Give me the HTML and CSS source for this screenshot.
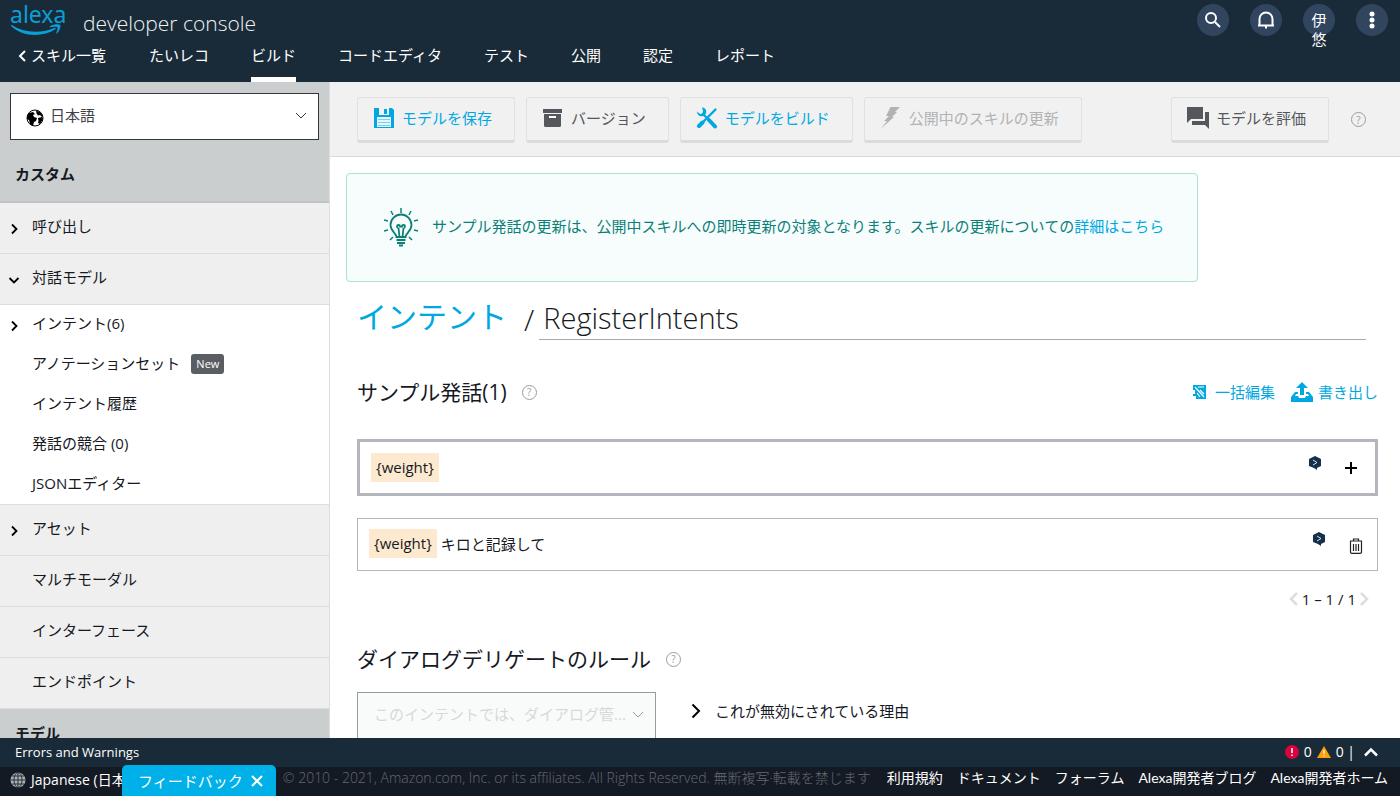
FILE: index.html
```html
<!DOCTYPE html>
<html lang="ja">
<head>
<meta charset="utf-8">
<meta name="viewport" content="width=device-width, initial-scale=1">
<title>alexa developer console</title>
<link rel="stylesheet" href="styles.css">
</head>
<body>
<header class="header">
  <div class="header-top">
    <a class="logo" href="#">
      <span class="logo-text">alexa</span>
      <svg class="logo-smile" width="52" height="12" viewBox="0 0 52 12" aria-hidden="true"><path d="M2 1C13 9 32 9.500 44.500 4c1-.5 1.800.5.900 1.200C33 13.500 12 13 1.300 2.200.700 1.500 1.300.500 2 1z"/><path d="M40 2.200C43.500.200 48.500-.2 50 .8c1.200 1.200-.3 6-3 8.500-.5.400-1.100.2-.9-.3.700-1.700 2-4.800 1.200-5.700-.8-.9-4.800-.4-6.800-.1-.8 0-1-.7-.5-1z"/></svg>
    </a>
    <span class="product">developer console</span>
    <div class="header-actions">
      <button class="round" aria-label="検索"><svg width="16" height="16" viewBox="0 0 16 16"><circle cx="6" cy="6" r="5"/><path d="M10 10l5 5"/></svg></button>
      <button class="round" aria-label="通知"><svg width="18" height="18" viewBox="0 0 18 18"><path d="M1 14.500h16M2.500 14V8a6.500 6.500 0 0 1 13 0v6M8 16.500h2"/></svg></button>
      <button class="round user">伊悠</button>
      <button class="round" aria-label="メニュー"><svg class="dots" width="6" height="18" viewBox="0 0 6 18"><circle cx="3" cy="3" r="2.500"/><circle cx="3" cy="9" r="2.500"/><circle cx="3" cy="15" r="2.500"/></svg></button>
    </div>
  </div>
  <nav class="tabs">
    <a class="tab back" href="#"><svg width="8" height="12" viewBox="0 0 8 12"><path d="M7 1L2 6l5 5"/></svg>スキル一覧</a>
    <a class="tab" href="#">たいレコ</a>
    <a class="tab active" href="#">ビルド</a>
    <a class="tab" href="#">コードエディタ</a>
    <a class="tab" href="#">テスト</a>
    <a class="tab" href="#">公開</a>
    <a class="tab" href="#">認定</a>
    <a class="tab" href="#">レポート</a>
  </nav>
</header>

<div class="workspace">
  <aside class="sidebar">
    <div class="side-head">
      <div class="lang">
        <svg class="earth" width="18" height="18" viewBox="0 0 18 18" aria-hidden="true"><circle cx="9" cy="9" r="8" fill="#fff" stroke="#000"/><path d="M1 7l2-3 4-1 2 2-2 1 1 2 3 1-1 3-2 1-1 4-3-2-1-4-2-1zM10 1.500l4 1.500 3 4-1 1-2-2-2 .5-1.500-2zM12 9l4-1 1 2-3 5-2-1 .5-2z"/></svg>
        <select class="lang-select" aria-label="言語"><option>日本語</option></select>
        <svg class="caret" width="12" height="8" viewBox="0 0 12 8" aria-hidden="true"><path d="M1 1l5 5 5-5"/></svg>
      </div>
      <h2 class="side-title">カスタム</h2>
    </div>
    <nav>
      <a class="side-row" href="#"><svg class="chev" width="14" height="12" viewBox="0 0 14 12"><path d="M5 1.500L9.500 6 5 10.500"/></svg>呼び出し</a>
      <a class="side-row" href="#"><svg class="chev" width="14" height="12" viewBox="0 0 14 12"><path d="M2.500 4L7 8.500 11.500 4"/></svg>対話モデル</a>
      <div class="side-sub">
        <a class="sub-row" href="#"><svg class="chev" width="14" height="12" viewBox="0 0 14 12"><path d="M5 1.500L9.500 6 5 10.500"/></svg>インテント(6)</a>
        <a class="sub-row" href="#">アノテーションセット<span class="new">New</span></a>
        <a class="sub-row" href="#">インテント履歴</a>
        <a class="sub-row" href="#">発話の競合 (0)</a>
        <a class="sub-row" href="#">JSONエディター</a>
      </div>
      <a class="side-row" href="#"><svg class="chev" width="14" height="12" viewBox="0 0 14 12"><path d="M5 1.500L9.500 6 5 10.500"/></svg>アセット</a>
      <a class="side-row" href="#">マルチモーダル</a>
      <a class="side-row" href="#">インターフェース</a>
      <a class="side-row" href="#">エンドポイント</a>
    </nav>
    <div class="side-foot"><h2 class="side-title">モデル</h2></div>
  </aside>

  <main class="main">
    <div class="toolbar">
      <button class="tool blue"><svg width="22" height="22" viewBox="0 0 22 22"><path fill="currentColor" d="M1 1h18l2 2v18H1z"/><path fill="#f1f1f1" d="M6 1h10v7H6z"/><path fill="currentColor" d="M11 2h3v5h-3z"/><path fill="#e4f5fb" d="M4 10h14v10H4z"/><path stroke="#7fcdec" d="M5 12.500h12M5 15.500h12M5 18.500h12"/></svg>モデルを保存</button>
      <button class="tool"><svg width="22" height="22" viewBox="0 0 22 22"><path fill="currentColor" d="M1 2h19v4H1zM2 7h17v11.500a1.500 1.500 0 0 1-1.500 1.500h-14A1.500 1.500 0 0 1 2 18.500z"/><path fill="#fff" d="M7 9h7v2H7z"/></svg>バージョン</button>
      <button class="tool blue"><svg width="22" height="22" viewBox="0 0 22 22"><path fill="none" stroke="currentColor" stroke-width="4" stroke-linecap="round" d="M13 13l6 6.500M3 19l3.500-3.500"/><path fill="none" stroke="currentColor" stroke-width="2.400" stroke-linecap="round" d="M6 16L19.500 2.500M7 7l7 7"/><path fill="currentColor" d="M6 .5c3 0 5 2.500 4 6L7.500 9C4 10 1 8 1 4.500l3 2.500 2.500-.5.500-2.500z"/></svg>モデルをビルド</button>
      <button class="tool" disabled><svg width="22" height="22" viewBox="0 0 22 22"><path fill="currentColor" d="M10.500 0H20l-5 5h2l-5 5h2L1 21.500 7 14H4l5-5H6z"/></svg>公開中のスキルの更新</button>
      <button class="tool evaluate"><svg width="22" height="22" viewBox="0 0 22 22"><path fill="currentColor" d="M0 0h16v12H4l-4 4zM18 5h4v17l-4-4H5v-4h13z"/></svg>モデルを評価</button>
      <button class="help" aria-label="ヘルプ">?</button>
    </div>

    <div class="content">
      <div class="notice">
        <svg width="36" height="40" viewBox="0 0 36 40" aria-hidden="true"><path d="M18 1v5M8 4l2 4M28 4l-2 4M1 13l4 1M35 13l-4 1M1 24l4-1M35 24l-4-1M7 33l3-3M29 33l-3-3"/><path class="thick" d="M13.500 30c0-4-6-5.500-6-12a10.500 10.500 0 0 1 21 0c0 6.500-6 8-6 12zM13.500 33h9M14 36h8M16 38.500h4M16.500 30l-1-9M19.500 30l1-9M15.500 21a1.500 1.500 0 1 1 1.500-1.500h2a1.500 1.500 0 1 1 1.500 1.500"/></svg>
        <p class="notice-text">サンプル発話の更新は、公開中スキルへの即時更新の対象となります。スキルの更新についての<a href="#">詳細はこちら</a></p>
      </div>

      <div class="title-row">
        <a class="crumb" href="#">インテント</a>
        <span class="slash">/</span>
        <input class="intent-name" type="text" value="RegisterIntents" aria-label="インテント名">
      </div>

      <div class="section-head">
        <h2 class="section-title">サンプル発話(1)</h2>
        <button class="help" aria-label="ヘルプ">?</button>
        <div class="section-links">
          <a class="action" href="#"><svg width="13" height="14" viewBox="0 0 13 14"><path fill="#00a8e1" d="M0 0h13v14H3v-3H0v-2h2V5H0z"/><path stroke="#fff" stroke-width="1.200" d="M2 2l9 10M5 2h6M4 8l3 4M7 5l4 4"/></svg>一括編集</a>
          <a class="action export" href="#"><svg width="22" height="20" viewBox="0 0 22 20"><path fill="currentColor" d="M11 0l6 6h-4v7H9V6H5zM4 10h3v2H5l-1 2h3l1 2h6l1-2h3l-1-2h-2v-2h3l4 5v5H0v-5z"/></svg>書き出し</a>
        </div>
      </div>

      <div class="utterance entry">
        <mark class="slot">{weight}</mark>
        <div class="row-icons">
          <svg class="hex" width="12" height="14" viewBox="0 0 12 14"><path fill="#15304a" d="M6 0l6 3v7l-4 2v2l-3-2-5-2V3z"/><path fill="none" stroke="#d7e2ea" d="M4 4l4 2.500L4 9"/></svg>
          <button class="icon-btn" aria-label="追加"><svg width="12" height="12" viewBox="0 0 12 12"><path stroke="#000" stroke-width="2" d="M6 0v12M0 6h12"/></svg></button>
        </div>
      </div>
      <div class="utterance saved">
        <mark class="slot">{weight}</mark><span>キロと記録して</span>
        <div class="row-icons">
          <svg class="hex" width="12" height="14" viewBox="0 0 12 14"><path fill="#15304a" d="M6 0l6 3v7l-4 2v2l-3-2-5-2V3z"/><path fill="none" stroke="#d7e2ea" d="M4 4l4 2.500L4 9"/></svg>
          <button class="icon-btn trash" aria-label="削除"><svg width="14" height="16" viewBox="0 0 14 16"><path fill="none" stroke="#222" stroke-width="1.200" d="M1 3h12M4.500 3V1h5v2M1.500 3v11q0 1.400 1.500 1.400h8q1.500 0 1.500-1.400V3M4.500 6v7M7 6v7M9.500 6v7"/></svg></button>
        </div>
      </div>
      <div class="pager">
        <button class="icon-btn" aria-label="前へ"><svg width="9" height="14" viewBox="0 0 9 14"><path d="M8 1L2 7l6 6"/></svg></button>
        <span>1 – 1 / 1</span>
        <button class="icon-btn" aria-label="次へ"><svg width="9" height="14" viewBox="0 0 9 14"><path d="M1 1l6 6-6 6"/></svg></button>
      </div>

      <div class="section-head rules">
        <h2 class="section-title">ダイアログデリゲートのルール</h2>
        <button class="help" aria-label="ヘルプ">?</button>
      </div>
      <div class="rule-row">
        <div class="rule-box">
          <select class="rule-select" aria-label="ダイアログデリゲートのルール" disabled><option>このインテントでは、ダイアログ管...</option></select>
          <svg class="caret" width="12" height="8" viewBox="0 0 12 8" aria-hidden="true"><path d="M1 1l5 5 5-5"/></svg>
        </div>
        <button class="reason"><svg width="10" height="16" viewBox="0 0 10 16"><path d="M1.500 1.500L8 8l-6.500 6.500"/></svg>これが無効にされている理由</button>
      </div>
    </div>
  </main>
</div>

<section class="errors">
  <span class="errors-title">Errors and Warnings</span>
  <div class="counts">
    <svg width="14" height="14" viewBox="0 0 14 14"><circle cx="7" cy="7" r="7" fill="#d9043d"/><path stroke="#fff" stroke-width="1.500" d="M7 3v5M7 9.500V11"/></svg><span>0</span>
    <svg width="14" height="12" viewBox="0 0 14 12"><path fill="#ff9f0a" d="M7 0l7 12H0z"/><path stroke="#fff" stroke-width="1.200" d="M7 4v4M7 9.200v1.300"/></svg><span>0 |</span>
    <button class="icon-btn" aria-label="開く"><svg width="14" height="10" viewBox="0 0 14 10"><path fill="none" stroke="#fff" stroke-width="2.500" d="M1 8.500L7 2.500l6 6"/></svg></button>
  </div>
</section>
<footer class="footer">
  <button class="locale"><svg width="16" height="16" viewBox="0 0 16 16"><circle cx="8" cy="8" r="7.500" fill="#aab0b6"/><path fill="none" stroke="#2a3038" d="M8 .5v15M.5 8h15M2 4h12M2 12h12"/><ellipse cx="8" cy="8" rx="4" ry="7.500" fill="none" stroke="#2a3038"/></svg>Japanese (日本語)</button>
  <div class="feedback"><span>フィードバック</span><button class="icon-btn" aria-label="閉じる"><svg width="12" height="12" viewBox="0 0 12 12"><path stroke="#fff" stroke-width="2.200" d="M1 1l10 10M11 1L1 11"/></svg></button></div>
  <span class="copyright">© 2010 - 2021, Amazon.com, Inc. or its affiliates. All Rights Reserved. 無断複写·転載を禁じます</span>
  <nav class="foot-links">
    <a href="#">利用規約</a>
    <a href="#">ドキュメント</a>
    <a href="#">フォーラム</a>
    <a href="#">Alexa開発者ブログ</a>
    <a href="#">Alexa開発者ホーム</a>
  </nav>
</footer>
</body>
</html>
```

FILE: styles.css
```css
* { box-sizing: border-box; }
body {
  margin: 0;
  height: 100vh;
  display: flex;
  flex-direction: column;
  overflow: hidden;
  font: 15px/20px "Open Sans", "Noto Sans CJK JP", sans-serif;
  color: #16191f;
  background: #fff;
}
a { color: inherit; text-decoration: none; }
button, select, input { font: inherit; color: inherit; }
button { background: none; border: 0; padding: 0; white-space: nowrap; }
h2, p { margin: 0; }
svg { flex: none; }

.header { flex: none; background: #192b39; color: #fff; }
.header-top { display: flex; align-items: flex-start; height: 42px; padding: 4px 12px 0 10px; }
.logo { color: #0a9fd6; width: 52px; }
.logo-text { display: block; font: 400 23px/20px "Noto Sans", sans-serif; }
.logo-smile { display: block; fill: #0a9fd6; }
.product { margin: 9px 0 0 21px; font-size: 21px; font-weight: 300; color: #f0f2f3; }
.header-actions { display: flex; gap: 21px; margin-left: auto; }
.round {
  width: 32px; height: 32px; border-radius: 50%;
  background: #32455f; color: #fff;
  display: flex; align-items: center; justify-content: center;
}
.round svg { fill: none; stroke: #fff; stroke-width: 2; }
.round .dots { fill: #fff; stroke: none; }
.user { display: block; padding: 7px 8px 0; line-height: 19px; white-space: normal; word-break: break-all; }
.tabs { display: flex; gap: 42px; height: 40px; padding-left: 18px; }
.tab { height: 40px; padding-top: 3px; white-space: nowrap; }
.back { display: flex; gap: 5px; padding-right: 1px; }
.back svg { margin-top: 5px; fill: none; stroke: #fff; stroke-width: 2; }
.active { border-bottom: 5px solid #fff; }

.workspace { flex: 1; min-height: 0; display: flex; }
.sidebar { flex: none; width: 330px; overflow: hidden; border-right: 1px solid #dcdede; background: #fff; }
.side-head { height: 121px; padding: 11px 10px 0; background: #cacece; border-bottom: 2px solid #bfc3c3; }
.lang { position: relative; }
.lang-select { appearance: none; width: 100%; height: 47px; padding: 0 40px 4px 39px; border: 1px solid #33373c; border-radius: 0; background: #fff; color: #3d4249; }
.earth { position: absolute; left: 16px; top: 16px; }
.caret { position: absolute; right: 12px; top: 19px; fill: none; stroke: #33373c; }
.side-title { font-size: 15px; font-weight: 700; line-height: 20px; }
.side-head .side-title { padding: 24px 0 0 5px; }
.side-row { display: flex; align-items: center; position: relative; height: 51px; padding: 0 0 4px 32px; background: #efefef; border-bottom: 1px solid #dcdede; }
.side-sub { height: 200px; background: #fff; border-bottom: 1px solid #dcdede; }
.sub-row { display: flex; align-items: center; position: relative; height: 40px; padding: 0 0 4px 32px; }
.chev { position: absolute; left: 7px; top: 20px; fill: none; stroke: #000; stroke-width: 1.800; }
.sub-row .chev { top: 15px; }
.new { margin: 2px 0 0 11px; padding: 0 5px; border-radius: 3px; background: #5a5e64; color: #fff; font-size: 11px; line-height: 20px; }
.side-foot { height: 60px; padding: 14px 0 0 15px; background: #cacece; }

.main { flex: 1; min-width: 0; overflow: hidden; }
.toolbar { display: flex; align-items: center; gap: 11px; height: 75px; padding: 1px 34px 0 27px; background: #f1f1f1; border-bottom: 1px solid #d9dbdb; }
.tool { display: flex; align-items: center; gap: 7px; height: 46px; padding: 0 22px 2px 15px; border: 1px solid #dfe1e1; border-bottom: 3px solid #d9dcdc; border-radius: 3px; color: #54585d; }
.tool.blue, .crumb, .section-links, .notice a { color: #00a8e1; }
.tool:disabled { color: #b0b3b5; }
.evaluate { margin-left: auto; }
.help { width: 15px; height: 15px; border: 1px solid #999da0; border-radius: 50%; color: #999da0; font-size: 10px; line-height: 12px; text-align: center; }
.toolbar .help { margin-left: 11px; }

.content { padding: 16px 22px 0 27px; }
.notice { display: flex; align-items: center; gap: 13px; width: 852px; max-width: 100%; height: 109px; margin-left: -11px; padding: 0 32px 2px 36px; border: 1px solid #a5e6cf; border-radius: 4px; background: #f7fdfd; color: #0c8078; }
.notice svg { fill: none; stroke: currentColor; stroke-width: 1.500; }
.notice .thick { stroke-width: 1.800; }
.notice-text { padding-bottom: 2px; white-space: nowrap; }
.title-row { display: flex; align-items: flex-end; height: 58px; padding-right: 12px; font-size: 30px; line-height: 40px; }
.crumb { height: 43px; }
.slash { margin: 0 5px 0 17px; font-size: 30px; font-weight: 300; }
.intent-name { flex: 1; min-width: 0; height: 42px; padding: 0 4px 3px; border: 0; border-bottom: 1px solid #a4abab; background: none; font-size: 29px; font-weight: 300; }
.section-head { display: flex; align-items: center; gap: 15px; height: 30px; margin-top: 37px; }
.section-title { font-size: 21px; font-weight: 400; line-height: 30px; }
.section-links { display: flex; gap: 16px; margin-left: auto; }
.action { display: flex; align-items: center; gap: 9px; white-space: nowrap; }
.export { gap: 5px; }
.utterance { display: flex; align-items: center; }
.entry { height: 57px; margin-top: 32px; padding: 0 18px 0 11px; border: 3px solid #b5b5be; }
.saved { height: 53px; margin-top: 22px; padding: 0 14px 2px 11px; border: 1px solid #b5b5be; }
.slot { margin-right: 4px; padding: 4px 5px 5px; background: #fde9cf; color: #16191f; }
.row-icons { display: flex; align-items: center; gap: 24px; margin-left: auto; }
.hex { margin-bottom: 9px; }
.icon-btn { display: flex; }
.trash { margin-top: 4px; }
.pager { display: flex; align-items: center; justify-content: flex-end; gap: 4px; height: 20px; margin: 18px 9px 0 0; }
.pager svg { fill: none; stroke: #dcdede; stroke-width: 2.500; }
.rules { margin-top: 35px; }
.rule-row { display: flex; align-items: flex-start; gap: 35px; margin-top: 18px; }
.rule-box { position: relative; width: 299px; }
.rule-select { appearance: none; width: 100%; height: 47px; padding: 0 24px 4px 16px; border: 1px solid #979c9d; border-radius: 0; background: #f9fbfb; color: #d5d9d9; opacity: 1; }
.rule-box .caret { stroke: #999da0; }
.reason { display: flex; align-items: center; gap: 14px; height: 37px; }
.reason svg { fill: none; stroke: #000; stroke-width: 2; }

.errors { flex: none; display: flex; align-items: center; justify-content: space-between; height: 29px; padding: 0 22px 1px 15px; background: #192b39; color: #fff; font-size: 14px; }
.errors-title { font-size: 13px; }
.counts { display: flex; align-items: center; gap: 5px; }
.counts .icon-btn { margin-left: 4px; }
.footer { position: relative; flex: none; display: flex; align-items: center; justify-content: flex-end; gap: 16px; height: 29px; padding: 0 12px 8px 10px; background: #141a24; color: #fff; font-size: 14px; white-space: nowrap; }
.locale { display: flex; align-items: center; gap: 5px; width: 112px; margin: 4px auto 0 0; }
.feedback { position: absolute; left: 122px; bottom: 0; display: flex; align-items: center; gap: 8px; height: 31px; padding: 0 13px 0 16px; border-radius: 5px 5px 0 0; background: #00b0e8; font-size: 15px; }
.copyright { color: #636971; font-weight: 300; }
.foot-links { display: flex; gap: 14px; font-family: Lato, "Noto Sans CJK JP", sans-serif; }
```
